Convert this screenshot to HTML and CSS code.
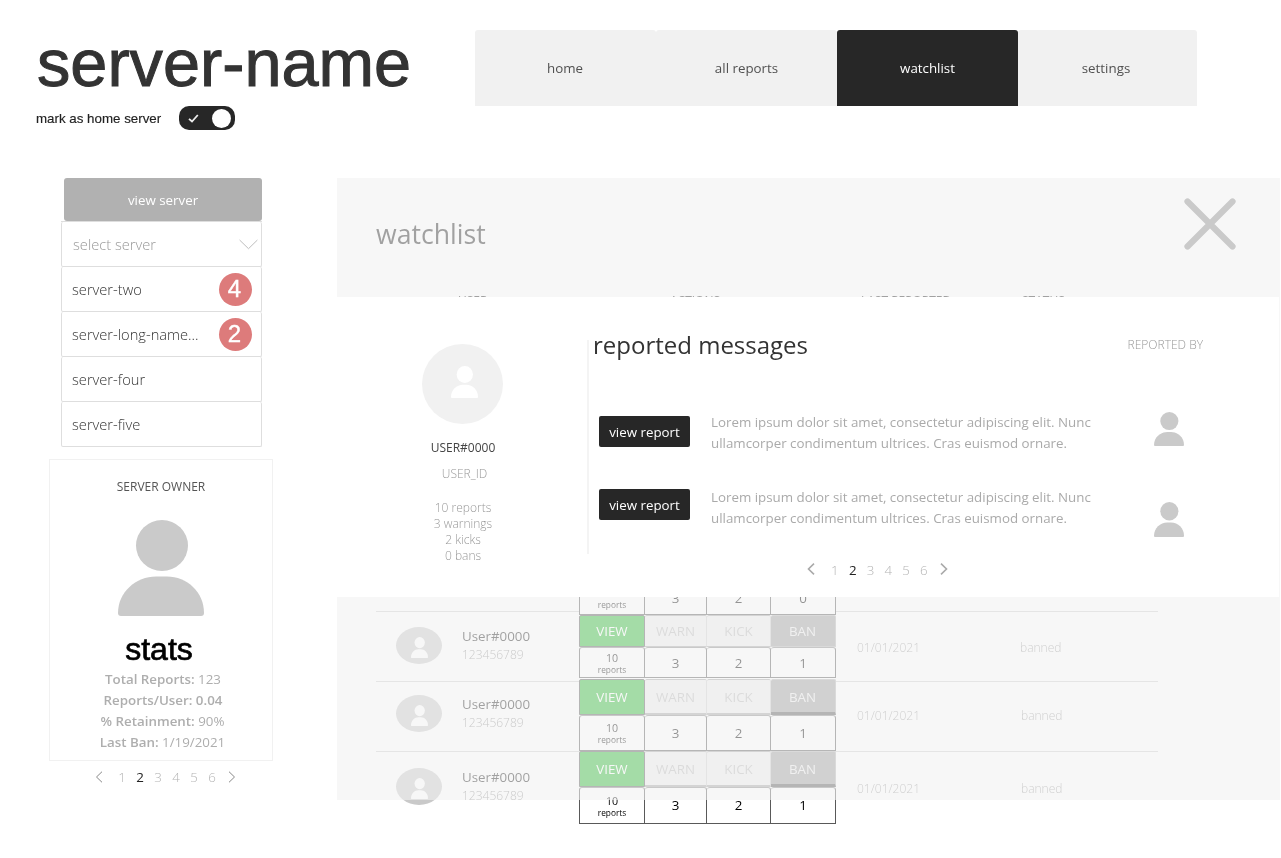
FILE: index.html
```html
<!DOCTYPE html>
<html lang="en">
<head>
<meta charset="utf-8">
<title>server-name</title>
<link rel="stylesheet" href="styles.css">
</head>
<body>
<svg class="defs" width="0" height="0" aria-hidden="true">
  <symbol id="person" viewBox="0 0 86 96" preserveAspectRatio="none">
    <ellipse cx="44" cy="25.5" rx="26" ry="25.5"/>
    <path d="M0 93C0 72 18 56.500 38 56.500H49C69 56.500 86 72 86 93Q86 96 83 96H3Q0 96 0 93Z"/>
  </symbol>
  <symbol id="prev" viewBox="0 0 8 12"><path d="M7 .7 1.500 6 7 11.300" fill="none"/></symbol>
  <symbol id="next" viewBox="0 0 8 12"><path d="M1 .7 6.500 6 1 11.300" fill="none"/></symbol>
</svg>

<header class="top">
  <div class="brand">
    <h1>server-name</h1>
    <div class="home-mark">
      <span>mark as home server</span>
      <span class="toggle">
        <svg width="11" height="9" viewBox="0 0 11 9"><path d="M1 4.800 4 7.500 9.800 1" fill="none" stroke="#eee" stroke-width="1.800"/></svg>
        <i></i>
      </span>
    </div>
  </div>
  <nav class="tabs">
    <a>home</a><a>all reports</a><a class="active">watchlist</a><a>settings</a>
  </nav>
</header>

<main class="layout">
  <aside class="side">
    <div class="view-server">view server</div>
    <ul class="servers">
      <li class="select">select server
        <svg width="19" height="11" viewBox="0 0 19 11"><path d="M.6 1 9.500 9.700 18.400 1" fill="none" stroke="#bdbdbd" stroke-width="1"/></svg>
      </li>
      <li>server-two<b>4</b></li>
      <li>server-long-name...<b>2</b></li>
      <li>server-four</li>
      <li>server-five</li>
    </ul>
    <section class="owner">
      <h2>SERVER OWNER</h2>
      <svg class="owner-pic" width="86" height="96"><use href="#person"/></svg>
      <h3>stats</h3>
      <p class="s1"><b>Total Reports:</b> 123</p>
      <p class="s2"><b>Reports/User: 0.04</b></p>
      <p><b>% Retainment:</b> 90%</p>
      <p><b>Last Ban:</b> 1/19/2021</p>
    </section>
    <div class="pager side-pager">
      <svg width="8" height="12"><use href="#prev"/></svg>
      <span>1</span><span class="on">2</span><span>3</span><span>4</span><span>5</span><span>6</span>
      <svg width="8" height="12"><use href="#next"/></svg>
    </div>
  </aside>

  <section class="board">
    <h2 class="board-title">watchlist</h2>
    <div class="heads"><span>USER</span><span>ACTIONS</span><span>LAST REPORTED</span><span>STATUS</span></div>

    <div class="row r0">
      <div class="who"></div>
      <div class="actions">
        <span class="stat rep"><small>reports</small></span><span class="stat">3</span><span class="stat">2</span><span class="stat">0</span>
      </div>
    </div>
    <div class="row r1">
      <div class="who">
        <span class="pic"><svg width="17" height="21"><use href="#person"/></svg></span>
        <div><strong>User#0000</strong><em>123456789</em></div>
      </div>
      <div class="actions">
        <span class="btn view">VIEW</span><span class="btn">WARN</span><span class="btn">KICK</span><span class="btn ban">BAN</span>
        <span class="stat rep">10<small>reports</small></span><span class="stat">3</span><span class="stat">2</span><span class="stat">1</span>
      </div>
      <span class="date">01/01/2021</span><span class="status">banned</span>
    </div>
    <div class="row r2">
      <div class="who">
        <span class="pic"><svg width="17" height="21"><use href="#person"/></svg></span>
        <div><strong>User#0000</strong><em>123456789</em></div>
      </div>
      <div class="actions">
        <span class="btn view">VIEW</span><span class="btn">WARN</span><span class="btn">KICK</span><span class="btn ban">BAN</span>
        <span class="stat rep">10<small>reports</small></span><span class="stat">3</span><span class="stat">2</span><span class="stat">1</span>
      </div>
      <span class="date">01/01/2021</span><span class="status">banned</span>
    </div>
    <div class="row r3">
      <div class="who">
        <span class="pic"><svg width="17" height="21"><use href="#person"/></svg></span>
        <div><strong>User#0000</strong><em>123456789</em></div>
      </div>
      <div class="actions">
        <span class="btn view">VIEW</span><span class="btn">WARN</span><span class="btn">KICK</span><span class="btn ban">BAN</span>
        <span class="stat rep">10<small>reports</small></span><span class="stat">3</span><span class="stat">2</span><span class="stat">1</span>
      </div>
      <span class="date">01/01/2021</span><span class="status">banned</span>
    </div>

    <div class="overlay">
      <svg class="close" width="52" height="52" viewBox="0 0 52 52"><path d="M3.500 3.500 48.500 48.500M48.500 3.500 3.500 48.500" stroke="#cacaca" stroke-width="6.200" stroke-linecap="round"/></svg>
      <div class="modal">
        <div class="profile">
          <span class="big-pic"><svg width="27" height="32"><use href="#person"/></svg></span>
          <strong>USER#0000</strong>
          <em>USER_ID</em>
          <p>10 reports<br>3 warnings<br>2 kicks<br>0 bans</p>
        </div>
        <div class="messages">
          <div class="msg-head"><h2>reported messages</h2><span>REPORTED BY</span></div>
          <div class="msg m1">
            <a>view report</a>
            <p>Lorem ipsum dolor sit amet, consectetur adipiscing elit. Nunc<br>ullamcorper condimentum ultrices. Cras euismod ornare.</p>
            <svg width="30" height="34"><use href="#person"/></svg>
          </div>
          <div class="msg m2">
            <a>view report</a>
            <p>Lorem ipsum dolor sit amet, consectetur adipiscing elit. Nunc<br>ullamcorper condimentum ultrices. Cras euismod ornare.</p>
            <svg width="30" height="35"><use href="#person"/></svg>
          </div>
          <div class="pager msg-pager">
            <svg width="8" height="12"><use href="#prev"/></svg>
            <span>1</span><span class="on">2</span><span>3</span><span>4</span><span>5</span><span>6</span>
            <svg width="8" height="12"><use href="#next"/></svg>
          </div>
        </div>
      </div>
    </div>
  </section>
</main>
</body>
</html>
```
FILE: styles.css
```css
* { box-sizing: border-box; margin: 0; padding: 0; }
body { width: 1281px; height: 858px; overflow: hidden; background: #fff; font-family: "Open Sans", sans-serif; font-size: 13.33px; color: #333; }
em { font-style: normal; }
h2, h3 { font-weight: 400; }
svg { display: block; flex: none; }
.defs { position: absolute; }

.top, .layout { will-change: opacity; }
.top { display: flex; height: 178px; padding: 30px 0 0 36px; }
.brand { width: 439px; font-family: "Liberation Sans", Arial, sans-serif; }
h1 { font-size: 66.67px; font-weight: 400; line-height: 76px; height: 76px; margin: -5px 0 0 1px; color: #333; -webkit-text-stroke: 1px #333; white-space: nowrap; }
.home-mark { display: flex; align-items: center; height: 24px; margin-top: 5px; color: #222; white-space: nowrap; }
.home-mark > span:first-child { width: 143px; -webkit-text-stroke: .15px #222; }
.toggle { display: flex; align-items: center; justify-content: space-between; width: 56px; height: 24px; padding: 0 4px 0 9px; border-radius: 10px; background: #272727; }
.toggle i { width: 19px; height: 19px; border-radius: 50%; background: #fff; }
.tabs { display: grid; grid-template-columns: 181px 181px 181px 179px; height: 76px; }
.tabs a { display: flex; align-items: center; justify-content: center; padding-right: 1px; background: #f1f1f1; color: #505050; border-radius: 3px 3px 0 0; }
.tabs a:nth-child(2) { padding-right: 0; }
.tabs a:last-child { padding-right: 3px; }
.tabs .active { background: #272727; color: #fff; padding-right: 0; }

.layout { display: flex; height: 680px; }
.side { width: 337px; padding-left: 49px; }
.view-server { width: 198px; height: 43px; margin-left: 15px; background: #b1b1b1; color: #fff; border-radius: 3px; line-height: 44px; text-align: center; }
.servers { width: 201px; margin-left: 12px; list-style: none; border-top: 1px solid #dedede; font-size: 14.67px; font-weight: 300; color: #333; }
.servers li { display: flex; align-items: center; justify-content: space-between; height: 45px; padding: 0 9px 0 10px; border: 1px solid #dedede; border-top: 0; border-radius: 2px; }
.servers .select { color: #999; padding: 0 3px 0 11px; }
.servers b { width: 33px; height: 33px; border-radius: 50%; background: #dd7b7b; color: #fff; font: 24px/32px "Liberation Sans", Arial, sans-serif; text-align: center; padding-right: 2px; -webkit-text-stroke: .4px #fff; }
.owner { width: 224px; height: 302px; margin-top: 12px; padding-top: 17px; border: 1px solid #f1f1f1; text-align: center; }
.owner h2 { font-size: 12px; line-height: 20px; color: #555; }
.owner-pic { margin: 23px auto 0 68px; fill: #cacaca; }
.owner h3 { margin: 13px 4px 0 0; height: 40px; font: 32px/40px "Liberation Sans", Arial, sans-serif; color: #000; -webkit-text-stroke: .7px #000; }
.owner p { line-height: 21px; color: #aeaeae; padding-left: 3px; }
.owner b { font-weight: 600; }
.owner .s1, .owner .s2 { padding-left: 4px; }

.pager { display: flex; align-items: center; height: 20px; font-weight: 300; color: #b4b4b4; }
.pager span { width: 18px; text-align: center; }
.pager .on { color: #222; font-weight: 400; }
.pager svg { stroke: #888; stroke-width: 1; }
.side-pager { margin: 6px 0 0 46px; }
.side-pager svg:first-child { margin-right: 10px; }
.side-pager svg:last-child { margin-left: 7px; }

.board { position: relative; width: 943px; height: 646px; padding-left: 39px; }
.board-title { height: 116px; font-size: 26.67px; line-height: 112px; color: #222; }
.heads { display: grid; grid-template-columns: 212px 191px 161px 200px; height: 247px; padding-left: 82px; font-size: 12px; line-height: 14px; color: #222; }
.row { display: grid; grid-template-columns: 203px 257px 184px 1fr; width: 782px; height: 70px; border-top: 1px solid #d1d1d1; }
.who { display: flex; gap: 20px; height: 37px; padding-left: 20px; }
.pic { display: flex; justify-content: center; width: 46px; height: 37px; padding: 10px 0 0 1px; border-radius: 50%; background: #c9c9c9; }
.pic svg { fill: #fff; }
.who strong { display: block; font-weight: 400; line-height: 18px; color: #222; }
.who em { display: block; font-size: 12px; line-height: 19px; font-weight: 300; color: #8c8c8c; }
.date, .status { font-size: 12px; line-height: 20px; font-weight: 300; color: #999; }
.date { padding-left: 21px; }
.r1 .who { margin-top: 15px; }
.r2 .who { margin-top: 13px; }
.r3 .who { margin-top: 16px; }
.r1 .date, .r1 .status { margin-top: 26px; }
.r2 .date, .r2 .status { margin-top: 24px; }
.r3 .date, .r3 .status { margin-top: 27px; }
.r2 .status, .r3 .status { padding-left: 1px; }
.actions { display: grid; grid-template-columns: 66px 62px 64px 65px; align-self: start; }
.r0 .actions { grid-template-rows: 35px; margin-top: 38px; }
.r1 .actions { grid-template-rows: 32px 31px; margin-top: 3px; }
.r2 .actions { grid-template-rows: 36px 36px; margin-top: -3px; }
.r3 .actions { grid-template-rows: 36px 37px; margin-top: -1px; }
.btn, .stat { display: flex; align-items: center; justify-content: center; border-right: 1px solid #cfcfcf; border-bottom: 1px solid #a5a5a5; border-radius: 2px 2px 0 0; }
.btn { background: #ededed; color: #b8b8b8; border-top: 1px solid #a5a5a5; }
.view { background: #2aba32; color: #fff; border-color: #555; border-left: 1px solid #555; }
.ban { background: #9e9e9e; color: #eee; border-color: #b5b5b5; padding-right: 1px; }
.r2 .btn, .r3 .btn { border-bottom-width: 2px; }
.r2 .view, .r3 .view { border-bottom-width: 1px; }
.r2 .ban, .r3 .ban { padding-top: 2px; border-bottom: 3px solid #555; }
.stat { background: #fff; color: #000; border: 1px solid #595959; border-left-width: 0; border-top-color: #888; border-radius: 3px 3px 0 0; }
.r3 .stat { padding-bottom: 1px; }
.rep { flex-direction: column; border-left-width: 1px; font-size: 10.67px; line-height: 12px; }
.r1 .rep, .r2 .rep, .r3 .rep { padding: 1px 0 0; }
.rep small { font-size: 8.3px; line-height: 11px; }
.r0 .rep { padding-top: 14px; }

.overlay { position: absolute; left: 0; top: 0; width: 943px; height: 622px; background: rgba(242,242,242,.61); }
.close { margin: 20px 0 0 846.5px; fill: none; }
.modal { display: flex; width: 942px; height: 300px; margin-top: 47px; background: #fff; }
.profile { display: flex; flex-direction: column; align-items: center; width: 250px; padding: 47px 0 0 1px; font-size: 12px; }
.big-pic { display: flex; width: 81px; height: 80px; padding: 22px 0 0 29px; border-radius: 50%; background: #f1f1f1; }
.big-pic svg { fill: #fff; }
.profile strong { margin: 14px 0 0 1px; font-weight: 400; line-height: 20px; color: #444; }
.profile em { margin: 6px 0 0 4px; font-weight: 300; line-height: 20px; color: #999; }
.profile p { margin: 16px 0 0 1px; font-weight: 300; line-height: 16px; color: #999; text-align: center; }
.messages { width: 640px; height: 214px; margin-top: 43px; border-left: 2px solid #f4f4f4; }
.msg-head { display: flex; justify-content: space-between; height: 36px; padding: 0 24px 0 4px; margin-top: -14px; align-items: center; }
.msg-head h2 { font-size: 24px; }
.msg-head span { font-size: 12px; font-weight: 300; color: #999; }
.msg { display: flex; padding-left: 10px; height: 46px; }
.m1 { margin-top: 50px; }
.m2 { margin-top: 29px; }
.msg a { width: 91px; height: 31px; margin-top: 4px; border-radius: 2px; background: #272727; color: #fff; line-height: 32px; text-align: center; }
.m2 a { margin-top: 2px; }
.msg p { width: 464px; padding-left: 21px; line-height: 21px; color: #aaa; white-space: nowrap; }
.msg svg { fill: #cacaca; }
.m2 svg { margin-top: 15px; }
.msg-pager { margin: 27px 0 0 218px; }
.msg-pager span { width: 17.8px; }
.msg-pager svg { stroke: #aaa; stroke-width: 1.600; margin-bottom: 3px; }
.msg-pager svg:first-child { margin-right: 11px; }
.msg-pager svg:last-child { margin-left: 7px; }
```
